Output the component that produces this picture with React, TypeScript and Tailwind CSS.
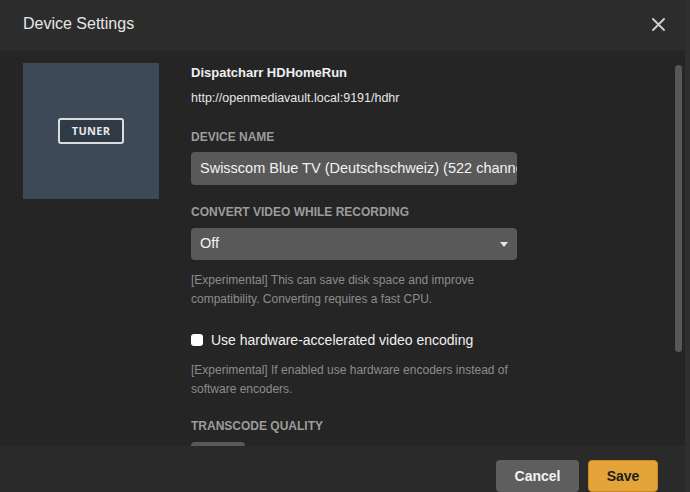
export default function App() {
  return (
    <div className="w-[690px] h-[492px] flex bg-[#2f2f2f] overflow-hidden font-['Liberation_Sans',_Arial,_sans-serif]">
      <div className="w-[685px] flex flex-col">
        {/* Header */}
        <header className="h-[51px] shrink-0 bg-[#2c2c2c] flex items-center justify-between pl-[23px] pr-[20px] pb-[3px]">
          <h1 className="text-[16px] leading-6 text-[#e6e6e6]">Device Settings</h1>
          <svg width="13" height="13" viewBox="0 0 13 13" className="text-[#d0d0d0]">
            <path d="M1 1L12 12M12 1L1 12" stroke="currentColor" strokeWidth="1.8" strokeLinecap="round" />
          </svg>
        </header>

        {/* Body */}
        <div className="relative flex-1 overflow-hidden bg-[#252525] flex items-start gap-8 pl-[23px] pt-3">
          <div className="w-[136px] h-[136px] shrink-0 bg-[#3d4957] flex items-center justify-center">
            <div className="w-[66px] h-[26px] rounded-[3px] border-2 border-[#dcdcdc] bg-[#2f3a47] flex items-center justify-center">
              <span className="text-[11px] font-bold tracking-wide text-[#e8e8e8] font-['Open_Sans',_sans-serif]">TUNER</span>
            </div>
          </div>

          <div className="w-[332px]">
            <div className="text-[13px] leading-5 font-bold text-[#f0f0f0]">Dispatcharr HDHomeRun</div>
            <div className="mt-[6px] text-[12.5px] leading-[18px] text-[#e6e6e6]">http://openmediavault.local:9191/hdhr</div>

            <div className="mt-[22px] text-[12px] leading-4 font-bold text-[#9c9c9c]">DEVICE NAME</div>
            <div className="mt-[7px] w-[326px] h-[33px] rounded-[4px] bg-[#595959] flex items-center pl-[9px] overflow-hidden">
              <span className="text-[14.5px] text-[#f2f2f2] whitespace-nowrap">Swisscom Blue TV (Deutschschweiz) (522 channels)</span>
            </div>

            <div className="mt-[19px] text-[12px] leading-4 font-bold text-[#9c9c9c]">CONVERT VIDEO WHILE RECORDING</div>
            <div className="mt-[8px] w-[326px] h-[32px] rounded-[4px] bg-[#595959] flex items-center justify-between pl-[9px] pr-[9px]">
              <span className="text-[14.5px] text-[#f2f2f2]">Off</span>
              <svg width="8" height="5" viewBox="0 0 8 5"><path d="M0 0H8L4 5Z" fill="#e6e6e6" /></svg>
            </div>
            <p className="mt-[11px] text-[12px] leading-[19px] text-[#8c8c8c]">
              [Experimental] This can save disk space and improve compatibility. Converting requires a fast CPU.
            </p>

            <div className="mt-[21px] h-5 flex items-center gap-2">
              <span className="w-[12px] h-[12px] rounded-[3px] bg-white" />
              <span className="text-[14px] text-[#f0f0f0]">Use hardware-accelerated video encoding</span>
            </div>
            <p className="mt-[11px] text-[12px] leading-[19px] text-[#8c8c8c]">
              [Experimental] If enabled use hardware encoders instead of software encoders.
            </p>

            <div className="mt-[19px] text-[12px] leading-4 font-bold text-[#9c9c9c]">TRANSCODE QUALITY</div>
            <div className="mt-[8px] w-[54px] h-[32px] rounded-[4px] bg-[#595959]" />
          </div>

          {/* Scrollbar thumb */}
          <div className="absolute right-[3px] top-[14px] w-[7px] h-[287px] rounded-full bg-[#575757]" />
        </div>

        {/* Footer */}
        <footer className="h-[46px] shrink-0 bg-[#2a2a2a] flex justify-end items-start gap-[9px] pt-[14px] pr-[27px]">
          <button className="h-[32px] w-[83px] rounded-[4px] bg-[#5e5e5e] text-[14px] font-bold text-[#f2f2f2]">Cancel</button>
          <button className="h-[32px] w-[70px] rounded-[4px] bg-[#e5a43a] border border-[#c88a22] text-[14px] font-bold text-[#1d1d1d]">Save</button>
        </footer>
      </div>
      <div className="flex-1 bg-[#2f2f2f]" />
    </div>
  )
}
